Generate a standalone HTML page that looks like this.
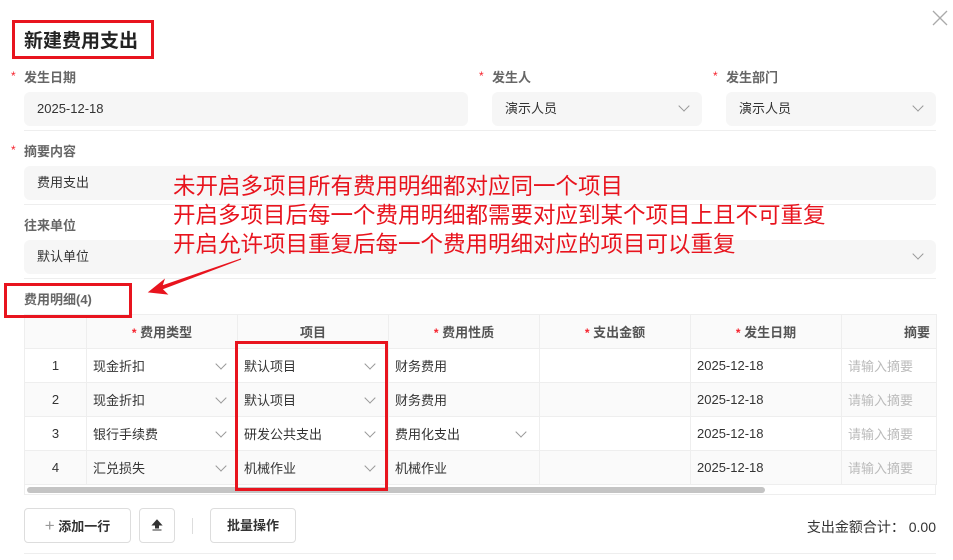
<!DOCTYPE html>
<html><head><meta charset="utf-8"><style>
*{box-sizing:border-box;margin:0;padding:0}
body{width:953px;height:560px;background:#fff;font-family:"Liberation Sans","Noto Sans CJK SC",sans-serif;font-size:13px;color:#333;position:relative;overflow:hidden}
.a{position:absolute}
.lbl{font-size:13px;color:#666;font-weight:bold}
.star{color:#f5222d;font-size:12px}
.inp{background:#f6f6f6;border-radius:6px;height:34px;line-height:34px;padding-left:13px;font-size:13px;color:#333}
.line{height:1px;background:#eee}
.chev{position:absolute;width:8px;height:8px;border-right:1px solid #999;border-bottom:1px solid #999;transform:rotate(45deg)}
.rb{position:absolute;border:3px solid #e8141e;z-index:5}
table{border-collapse:collapse;position:absolute;left:24px;top:314px;table-layout:fixed}
td,th{border:1px solid #eee;height:34px;font-size:13px;padding:0 6px;position:relative;white-space:nowrap;overflow:hidden}
th{background:#fafafa;color:#555;font-weight:bold;text-align:center}
tr.g td{background:#fafafa}
.btn{position:absolute;border:1px solid #ddd;border-radius:4px;height:35px;line-height:33px;text-align:center;font-weight:bold;font-size:13px;color:#333;background:#fff}
.red{color:#e8141e;font-size:22.5px;line-height:29px}
</style></head><body>
<div class="a" style="left:932px;top:10px;width:16px;height:16px">
<svg width="16" height="16"><path d="M1 1L15 15M15 1L1 15" stroke="#aaa" stroke-width="1.3"/></svg></div>
<div class="a" style="left:24px;top:26px;font-size:19px;font-weight:bold;color:#222">新建费用支出</div>
<div class="rb" style="left:12px;top:20px;width:142px;height:39px"></div>

<div class="a star" style="left:11px;top:69px">*</div><div class="a lbl" style="left:24px;top:67px">发生日期</div>
<div class="a star" style="left:479px;top:69px">*</div><div class="a lbl" style="left:492px;top:67px">发生人</div>
<div class="a star" style="left:713px;top:69px">*</div><div class="a lbl" style="left:726px;top:67px">发生部门</div>
<div class="a inp" style="left:24px;top:92px;width:444px">2025-12-18</div>
<div class="a inp" style="left:492px;top:92px;width:210px">演示人员<div class="chev" style="left:188px;top:10px"></div></div>
<div class="a inp" style="left:726px;top:92px;width:210px">演示人员<div class="chev" style="left:188px;top:10px"></div></div>
<div class="a line" style="left:24px;top:130px;width:912px"></div>

<div class="a star" style="left:11px;top:143px">*</div><div class="a lbl" style="left:24px;top:141px">摘要内容</div>
<div class="a inp" style="left:24px;top:166px;width:912px">费用支出</div>
<div class="a line" style="left:24px;top:204px;width:912px"></div>
<div class="a lbl" style="left:24px;top:215px">往来单位</div>
<div class="a inp" style="left:24px;top:240px;width:912px">默认单位<div class="chev" style="left:890px;top:10px"></div></div>
<div class="a line" style="left:24px;top:278px;width:912px"></div>

<div class="a red" style="left:173px;top:172px">未开启多项目所有费用明细都对应同一个项目<br>开启多项目后每一个费用明细都需要对应到某个项目上且不可重复<br>开启允许项目重复后每一个费用明细对应的项目可以重复</div>
<svg class="a" style="left:0;top:0" width="953" height="560"><path d="M241 259L162 286L164 280L149 292L167 294L162 289Z" fill="#e8141e" stroke="#e8141e" stroke-width="1"/></svg>

<div class="a lbl" style="left:24px;top:289px">费用明细(4)</div>
<div class="rb" style="left:4px;top:283px;width:128px;height:35px"></div>

<table>
<colgroup><col style="width:62px"><col style="width:151px"><col style="width:151px"><col style="width:151px"><col style="width:151px"><col style="width:151px"><col style="width:95px"></colgroup>
<tr><th></th><th><span class="star">*</span> 费用类型</th><th>项目</th><th><span class="star">*</span> 费用性质</th><th><span class="star">*</span> 支出金额</th><th><span class="star">*</span> 发生日期</th><th style="text-align:right">摘要</th></tr>
<tr><td style="text-align:center">1</td><td>现金折扣<div class="chev" style="left:130px;top:11px"></div></td><td>默认项目<div class="chev" style="left:128px;top:11px"></div></td><td>财务费用</td><td></td><td>2025-12-18</td><td style="color:#bbb">请输入摘要</td></tr>
<tr class="g"><td style="text-align:center">2</td><td>现金折扣<div class="chev" style="left:130px;top:11px"></div></td><td>默认项目<div class="chev" style="left:128px;top:11px"></div></td><td>财务费用</td><td></td><td>2025-12-18</td><td style="color:#bbb">请输入摘要</td></tr>
<tr><td style="text-align:center">3</td><td>银行手续费<div class="chev" style="left:130px;top:11px"></div></td><td>研发公共支出<div class="chev" style="left:128px;top:11px"></div></td><td>费用化支出<div class="chev" style="left:128px;top:11px"></div></td><td></td><td>2025-12-18</td><td style="color:#bbb">请输入摘要</td></tr>
<tr class="g"><td style="text-align:center">4</td><td>汇兑损失<div class="chev" style="left:130px;top:11px"></div></td><td>机械作业<div class="chev" style="left:128px;top:11px"></div></td><td>机械作业</td><td></td><td>2025-12-18</td><td style="color:#bbb">请输入摘要</td></tr>
</table>
<div class="a" style="left:24px;top:484px;width:912px;height:11px;border:1px solid #eee;border-top:none"></div>
<div class="a" style="left:27px;top:487px;width:738px;height:6px;border-radius:3px;background:#c4c4c4"></div>
<div class="rb" style="left:235px;top:341px;width:153px;height:150px"></div>

<div class="btn" style="left:24px;top:508px;width:107px"><span style="color:#999;font-weight:normal;font-size:17px">+</span> 添加一行</div>
<div class="btn" style="left:139px;top:508px;width:36px"><svg width="12" height="12" style="vertical-align:-1px"><path d="M6 1L1.5 6H4.5V9H7.5V6H10.5Z M1.5 11H10.5" fill="#333" stroke="#333" stroke-width="1"/></svg></div>
<div class="a" style="left:192px;top:518px;width:1px;height:16px;background:#ddd"></div>
<div class="btn" style="left:210px;top:508px;width:86px">批量操作</div>
<div class="a" style="right:17px;top:517px;font-size:14px;color:#333">支出金额合计： 0.00</div>
<div class="a line" style="left:24px;top:553px;width:912px"></div>
</body></html>
